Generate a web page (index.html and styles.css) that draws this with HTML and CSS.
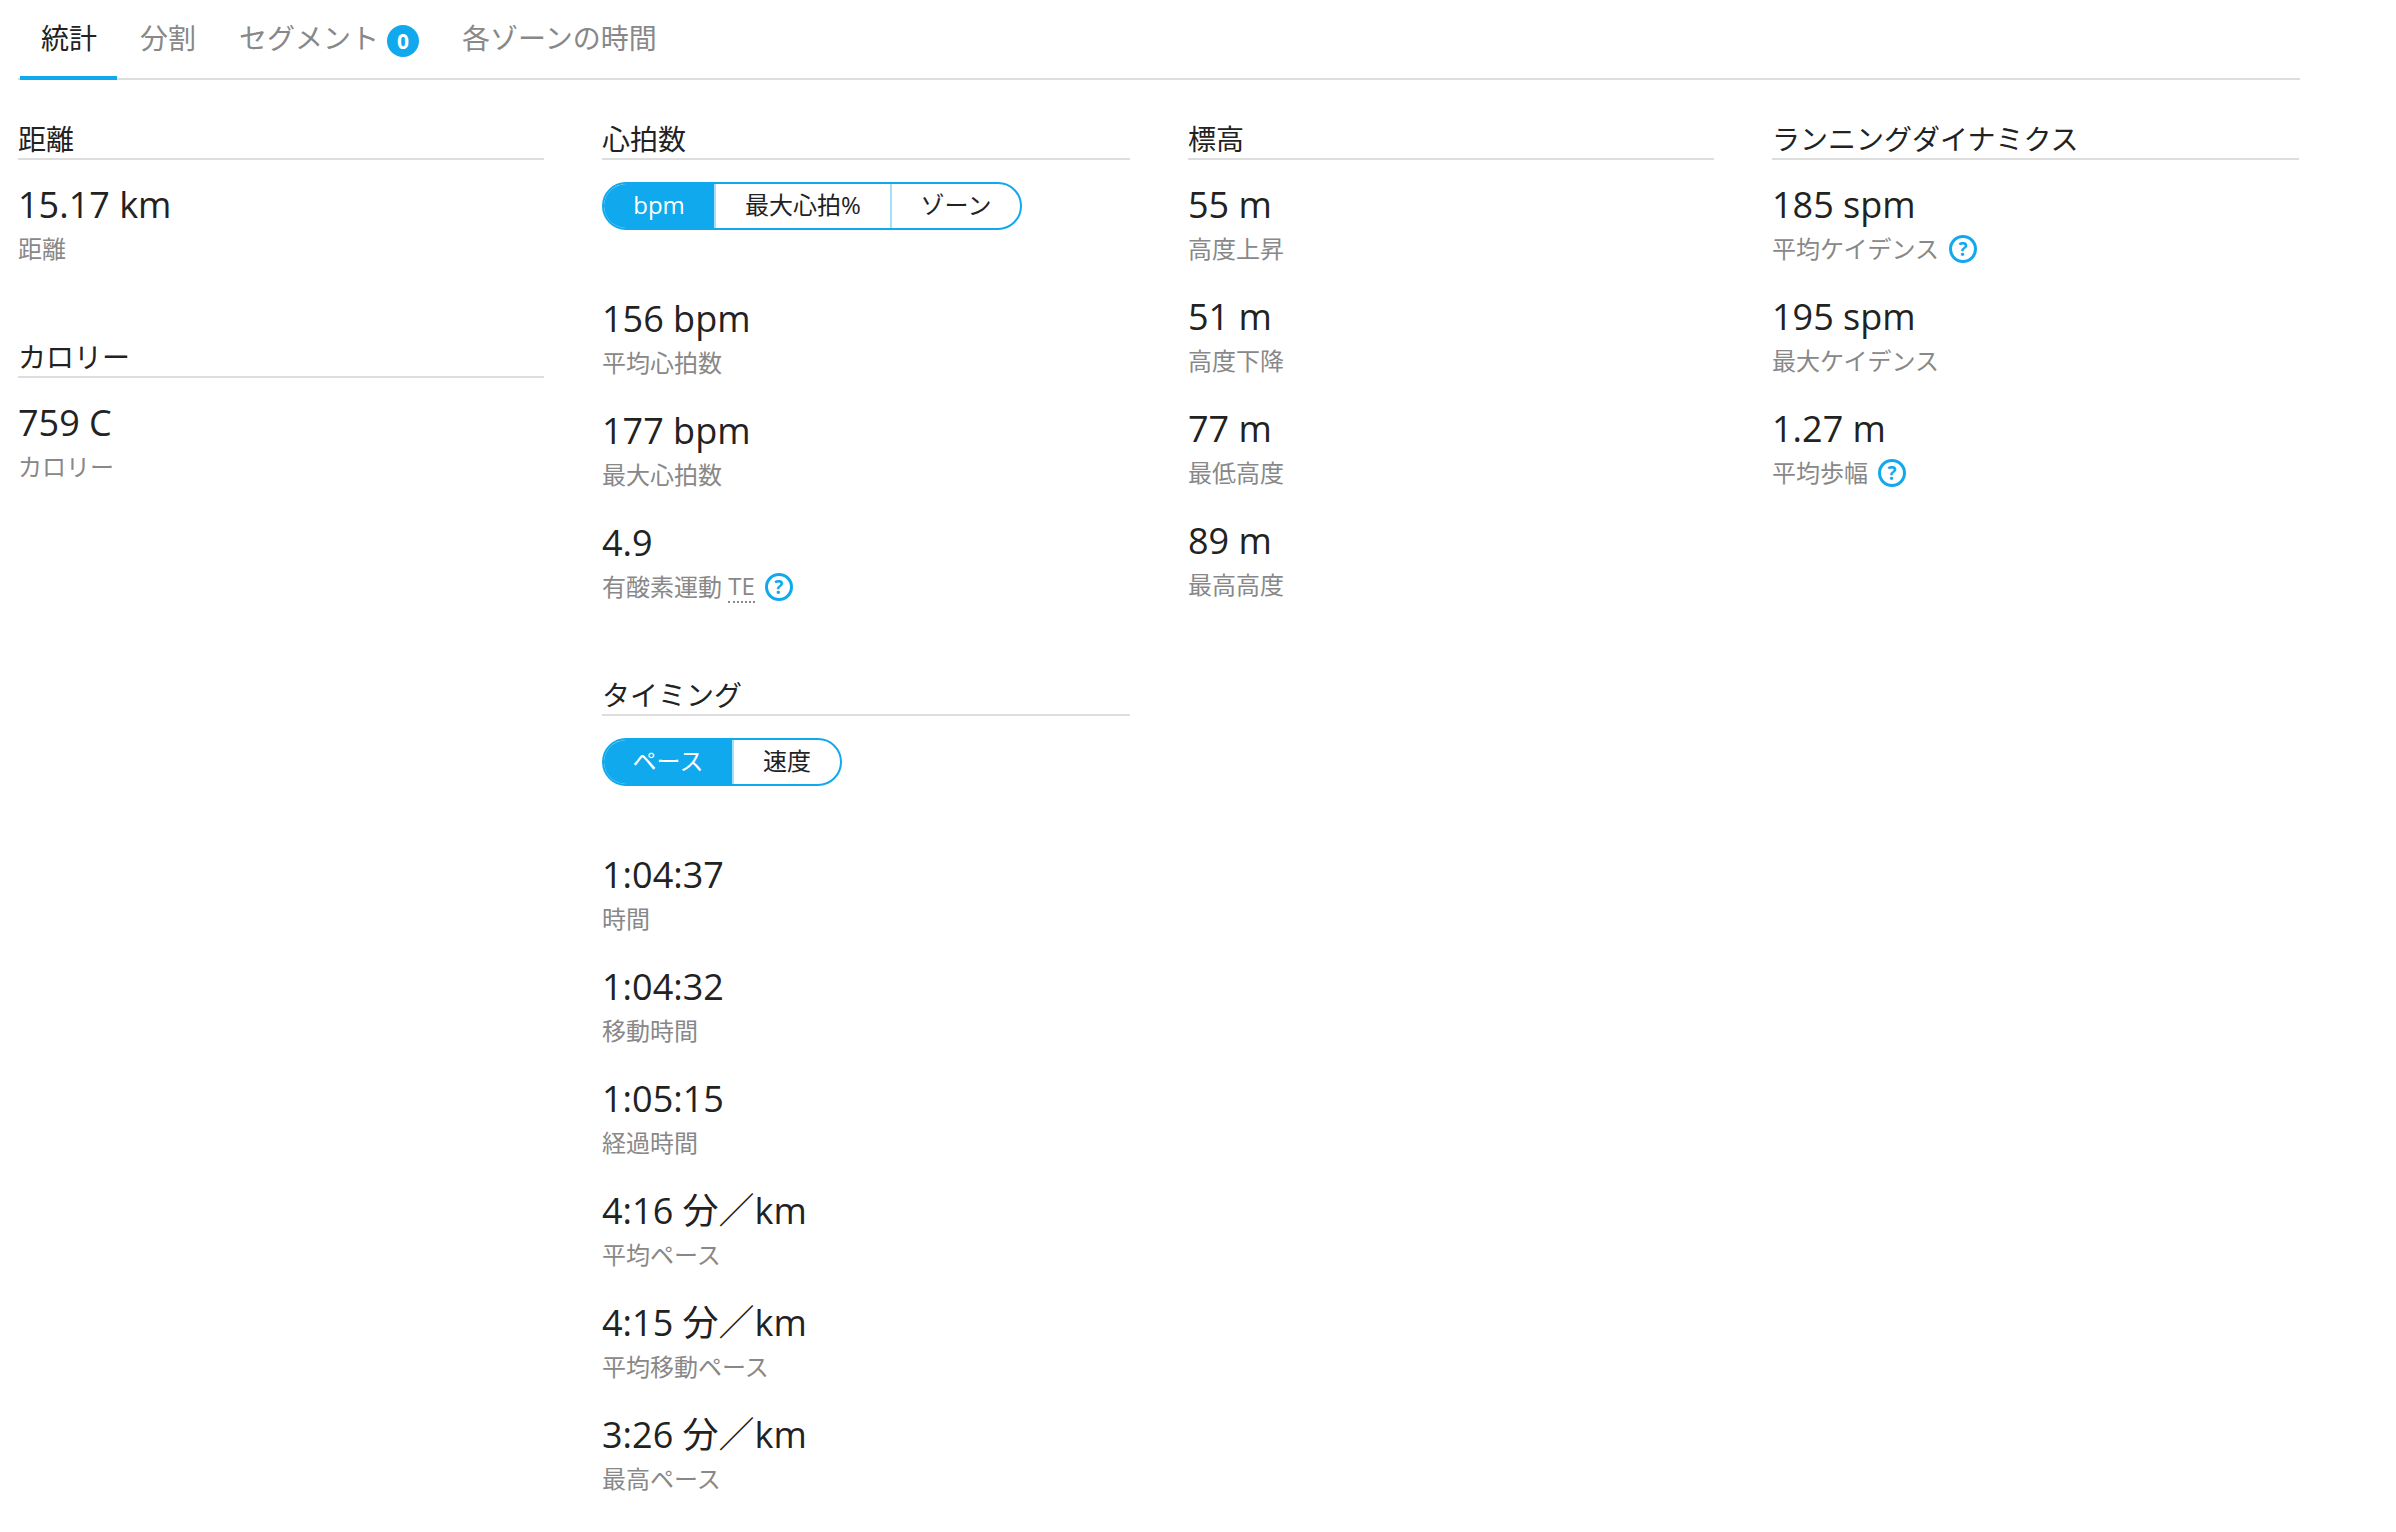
FILE: index.html
```html
<!DOCTYPE html>
<html lang="ja">
<head>
<meta charset="utf-8">
<title>統計</title>
<link rel="stylesheet" href="styles.css">
</head>
<body>
<nav class="tabs">
  <a class="tab active">統計</a>
  <a class="tab">分割</a>
  <a class="tab">セグメント<span class="badge">0</span></a>
  <a class="tab">各ゾーンの時間</a>
</nav>
<main class="grid">
  <div class="col">
    <section class="group">
      <h3 class="head">距離</h3>
      <div class="stat"><div class="value">15.17 km</div><div class="label">距離</div></div>
    </section>
    <section class="group">
      <h3 class="head">カロリー</h3>
      <div class="stat"><div class="value">759 C</div><div class="label">カロリー</div></div>
    </section>
  </div>
  <div class="col">
    <section class="group">
      <h3 class="head">心拍数</h3>
      <div class="seg">
        <span class="seg-item on w-bpm">bpm</span><span class="seg-item w-max">最大心拍%</span><span class="seg-item w-zone">ゾーン</span>
      </div>
      <div class="stat"><div class="value">156 bpm</div><div class="label">平均心拍数</div></div>
      <div class="stat"><div class="value">177 bpm</div><div class="label">最大心拍数</div></div>
      <div class="stat"><div class="value">4.9</div><div class="label">有酸素運動 <span class="dotted">TE</span><span class="help">?</span></div></div>
    </section>
    <section class="group">
      <h3 class="head">タイミング</h3>
      <div class="seg">
        <span class="seg-item on w-pace">ペース</span><span class="seg-item w-speed">速度</span>
      </div>
      <div class="stat"><div class="value">1:04:37</div><div class="label">時間</div></div>
      <div class="stat"><div class="value">1:04:32</div><div class="label">移動時間</div></div>
      <div class="stat"><div class="value">1:05:15</div><div class="label">経過時間</div></div>
      <div class="stat"><div class="value">4:16 分／km</div><div class="label">平均ペース</div></div>
      <div class="stat"><div class="value">4:15 分／km</div><div class="label">平均移動ペース</div></div>
      <div class="stat"><div class="value">3:26 分／km</div><div class="label">最高ペース</div></div>
    </section>
  </div>
  <div class="col">
    <section class="group">
      <h3 class="head">標高</h3>
      <div class="stat"><div class="value">55 m</div><div class="label">高度上昇</div></div>
      <div class="stat"><div class="value">51 m</div><div class="label">高度下降</div></div>
      <div class="stat"><div class="value">77 m</div><div class="label">最低高度</div></div>
      <div class="stat"><div class="value">89 m</div><div class="label">最高高度</div></div>
    </section>
  </div>
  <div class="col">
    <section class="group">
      <h3 class="head">ランニングダイナミクス</h3>
      <div class="stat"><div class="value">185 spm</div><div class="label">平均ケイデンス<span class="help">?</span></div></div>
      <div class="stat"><div class="value">195 spm</div><div class="label">最大ケイデンス</div></div>
      <div class="stat"><div class="value">1.27 m</div><div class="label">平均歩幅<span class="help">?</span></div></div>
    </section>
  </div>
</main>
</body>
</html>
```
FILE: styles.css
```css
* { box-sizing: border-box; }
html, body { margin: 0; padding: 0; background: #fff; }
body {
  width: 2396px;
  height: 1532px;
  overflow: hidden;
  padding: 0 96px 0 18px;
  font-family: "Open Sans", "Noto Sans CJK JP", sans-serif;
  color: #222;
}
.tabs {
  display: flex;
  height: 80px;
  border-bottom: 2px solid #ddd;
  padding-left: 2px;
  gap: 3px;
}
.tab {
  display: block;
  height: 80px;
  padding: 16px 20px 0;
  font-size: 28px;
  line-height: 44px;
  color: #888;
}
.tab:first-child { padding-left: 21px; }
.tab.active {
  color: #222;
  border-bottom: 4px solid #11a9ed;
}
.badge {
  display: inline-block;
  width: 32px;
  height: 32px;
  margin-left: 8px;
  border-radius: 50%;
  background: #11a9ed;
  color: #fff;
  font-size: 21px;
  font-weight: 700;
  line-height: 32px;
  text-align: center;
  vertical-align: 0;
}
.grid {
  display: grid;
  grid-template-columns: 526px 528px 526px 527px;
  column-gap: 58px;
  padding-top: 38px;
}
.group { margin-bottom: 65px; }
.head {
  margin: 0;
  height: 42px;
  border-bottom: 2px solid #ddd;
  font-size: 28px;
  font-weight: 400;
  line-height: 42px;
  color: #222;
}
.stat { margin-top: 21px; height: 91px; }
.head + .stat { margin-top: 20px; }
.stat .value {
  font-size: 36px;
  line-height: 50px;
  color: #222;
}
.stat .label {
  display: flex;
  align-items: center;
  margin-top: 2px;
  font-size: 24px;
  line-height: 34px;
  color: #888;
  white-space: pre;
}
.seg {
  display: flex;
  width: max-content;
  height: 48px;
  margin: 22px 0 64px;
  border: 2px solid #11a9ed;
  border-radius: 24px;
  overflow: hidden;
}
.seg-item {
  display: block;
  font-size: 24px;
  line-height: 42px;
  text-align: center;
  color: #222;
  border-left: 2px solid #a5e0fa;
}
.seg-item:first-child { border-left: 0; }
.seg-item.on { background: #11a9ed; color: #fff; }
.w-bpm { width: 110px; }
.w-max { width: 176px; }
.w-zone { width: 130px; }
.w-pace { width: 128px; }
.w-speed { width: 108px; }
.help {
  display: block;
  width: 28px;
  height: 28px;
  margin-left: 10px;
  border: 3px solid #11a9ed;
  border-radius: 50%;
  color: #11a9ed;
  font-size: 19px;
  font-weight: 700;
  line-height: 22px;
  text-align: center;
}
.dotted { border-bottom: 2px dotted #888; line-height: 30px; }
```
